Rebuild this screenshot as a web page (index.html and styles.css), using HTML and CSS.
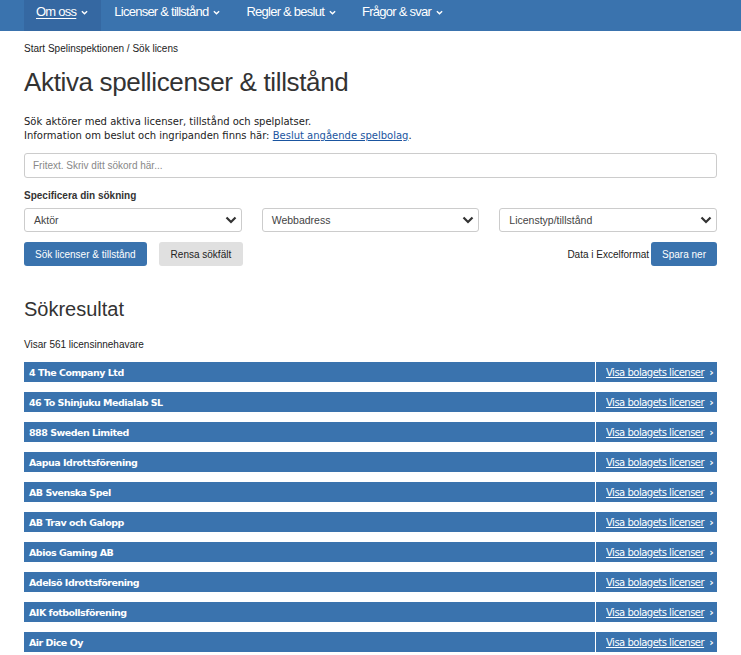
FILE: index.html
```html
<!DOCTYPE html>
<html lang="sv">
<head>
<meta charset="utf-8">
<title>Aktiva spellicenser &amp; tillstånd</title>
<link rel="stylesheet" href="styles.css">
</head>
<body>
<nav class="topnav">
  <ul class="nav-list">
    <li class="nav-item active"><a class="nav-link">Om oss</a><svg class="caret" viewBox="0 0 8 5"><path d="M1 1l3 3 3-3" fill="none" stroke="#fff" stroke-width="1.6"/></svg></li>
    <li class="nav-item"><a class="nav-link">Licenser &amp; tillstånd</a><svg class="caret" viewBox="0 0 8 5"><path d="M1 1l3 3 3-3" fill="none" stroke="#fff" stroke-width="1.6"/></svg></li>
    <li class="nav-item"><a class="nav-link">Regler &amp; beslut</a><svg class="caret" viewBox="0 0 8 5"><path d="M1 1l3 3 3-3" fill="none" stroke="#fff" stroke-width="1.6"/></svg></li>
    <li class="nav-item"><a class="nav-link">Frågor &amp; svar</a><svg class="caret" viewBox="0 0 8 5"><path d="M1 1l3 3 3-3" fill="none" stroke="#fff" stroke-width="1.6"/></svg></li>
  </ul>
</nav>
<main class="page">
  <div class="breadcrumb">Start Spelinspektionen / Sök licens</div>
  <h1 class="title">Aktiva spellicenser &amp; tillstånd</h1>
  <p class="intro">Sök aktörer med aktiva licenser, tillstånd och spelplatser.<br>Information om beslut och ingripanden finns här: <a class="intro-link">Beslut angående spelbolag</a>.</p>
  <div class="search-box">Fritext. Skriv ditt sökord här...</div>
  <div class="spec-label">Specificera din sökning</div>
  <div class="selects">
    <div class="select"><span>Aktör</span><svg class="sel-caret" viewBox="0 0 12 8"><path d="M1.5 1.5l4.5 4.5 4.5-4.5" fill="none" stroke="#333" stroke-width="2.2"/></svg></div>
    <div class="select"><span>Webbadress</span><svg class="sel-caret" viewBox="0 0 12 8"><path d="M1.5 1.5l4.5 4.5 4.5-4.5" fill="none" stroke="#333" stroke-width="2.2"/></svg></div>
    <div class="select"><span>Licenstyp/tillstånd</span><svg class="sel-caret" viewBox="0 0 12 8"><path d="M1.5 1.5l4.5 4.5 4.5-4.5" fill="none" stroke="#333" stroke-width="2.2"/></svg></div>
  </div>
  <div class="actions">
    <div class="btn-group">
      <button class="btn btn-primary">Sök licenser &amp; tillstånd</button>
      <button class="btn btn-grey">Rensa sökfält</button>
    </div>
    <div class="export">
      <span class="export-label">Data i Excelformat</span>
      <button class="btn btn-primary btn-save">Spara ner</button>
    </div>
  </div>
  <h2 class="results-title">Sökresultat</h2>
  <div class="count">Visar 561 licensinnehavare</div>
  <ul class="results">
    <li class="row"><span class="row-name">4 The Company Ltd</span><a class="row-link"><span class="u">Visa bolagets licenser</span><span class="chev">›</span></a></li>
    <li class="row"><span class="row-name">46 To Shinjuku Medialab SL</span><a class="row-link"><span class="u">Visa bolagets licenser</span><span class="chev">›</span></a></li>
    <li class="row"><span class="row-name">888 Sweden Limited</span><a class="row-link"><span class="u">Visa bolagets licenser</span><span class="chev">›</span></a></li>
    <li class="row"><span class="row-name">Aapua Idrottsförening</span><a class="row-link"><span class="u">Visa bolagets licenser</span><span class="chev">›</span></a></li>
    <li class="row"><span class="row-name">AB Svenska Spel</span><a class="row-link"><span class="u">Visa bolagets licenser</span><span class="chev">›</span></a></li>
    <li class="row"><span class="row-name">AB Trav och Galopp</span><a class="row-link"><span class="u">Visa bolagets licenser</span><span class="chev">›</span></a></li>
    <li class="row"><span class="row-name">Abios Gaming AB</span><a class="row-link"><span class="u">Visa bolagets licenser</span><span class="chev">›</span></a></li>
    <li class="row"><span class="row-name">Adelsö Idrottsförening</span><a class="row-link"><span class="u">Visa bolagets licenser</span><span class="chev">›</span></a></li>
    <li class="row"><span class="row-name">AIK fotbollsförening</span><a class="row-link"><span class="u">Visa bolagets licenser</span><span class="chev">›</span></a></li>
    <li class="row"><span class="row-name">Air Dice Oy</span><a class="row-link"><span class="u">Visa bolagets licenser</span><span class="chev">›</span></a></li>
  </ul>
</main>
</body>
</html>
```

FILE: styles.css
```css
* { box-sizing: border-box; }
html, body { margin: 0; padding: 0; background: #fff; }
body { font-family: "Liberation Sans", Arial, sans-serif; color: #333; overflow: hidden; }

.topnav { background: #3a73ae; height: 31px; }
.nav-list { list-style: none; margin: 0; padding: 0 0 0 24px; display: flex; height: 31px; }
.nav-item { display: flex; align-items: flex-start; padding: 4px 13px 0 12px; height: 31px; color: #fff; font-size: 13px; line-height: 15px; letter-spacing: -0.75px; }
.nav-item.active { background: #3568a2; }
.nav-item + .nav-item { margin-left: 1px; }
.nav-link { color: #fff; }
.nav-item.active .nav-link { text-decoration: underline; text-underline-offset: 2px; }
.caret { width: 7px; height: 5px; margin-left: 5px; margin-top: 6px; }

.page { padding: 0 24px; }
.breadcrumb { font-size: 10px; margin-top: 12px; color: #222; }
.title { font-weight: normal; font-size: 26px; margin: 13px 0 0; color: #333; letter-spacing: -0.35px; }
.intro { font-family: "DejaVu Sans", Verdana, sans-serif; font-size: 10px; line-height: 14px; margin: 17px 0 0; color: #222; }
.intro-link { color: #1a55a0; text-decoration: underline; }

.search-box { margin-top: 10px; height: 25px; border: 1px solid #ccc; border-radius: 3px; font-size: 10px; color: #888; padding: 0 8px; display: flex; align-items: center; }
.spec-label { font-weight: bold; font-size: 10px; margin-top: 12px; color: #333; }
.selects { display: flex; gap: 20px; margin-top: 7px; }
.select { flex: 1; height: 24px; border: 1px solid #ccc; border-radius: 3px; display: flex; align-items: center; justify-content: space-between; padding: 0 2px 0 9px; font-size: 10.5px; color: #444; }
.sel-caret { width: 12px; height: 8px; margin-right: 2px; }

.actions { display: flex; justify-content: space-between; align-items: center; margin-top: 10px; }
.btn-group { display: flex; gap: 12px; }
.btn { font-family: "Liberation Sans", Arial, sans-serif; font-size: 10px; height: 24px; border: 0; border-radius: 3px; padding: 0 11px; cursor: pointer; }
.btn-primary { background: #3a73ae; color: #fff; }
.btn-grey { background: #e0e0e0; color: #222; padding: 0 12px; }
.export { display: flex; align-items: center; }
.export-label { font-size: 10px; color: #222; margin-right: 2px; }
.btn-save { padding: 0 11px; }

.results-title { font-weight: normal; font-size: 20px; margin: 32px 0 0; color: #333; }
.count { font-size: 10px; margin-top: 18px; color: #222; }
.results { list-style: none; margin: 12px 0 0; padding: 0; display: flex; flex-direction: column; gap: 10px; }
.row { display: flex; height: 20px; background: #3a73ae; color: #fff; font-family: "DejaVu Sans", Verdana, sans-serif; font-size: 10px; }
.row-name { flex: 1; font-weight: bold; font-size: 9.5px; letter-spacing: -0.5px; padding-left: 5px; display: flex; align-items: center; }
.row-link { width: 122px; border-left: 1px solid #fff; display: flex; align-items: center; padding-left: 10px; color: #fff; }
.row-link .u { text-decoration: underline; letter-spacing: -0.5px; }
.chev { margin-left: 5px; font-size: 11px; font-weight: bold; }
```
